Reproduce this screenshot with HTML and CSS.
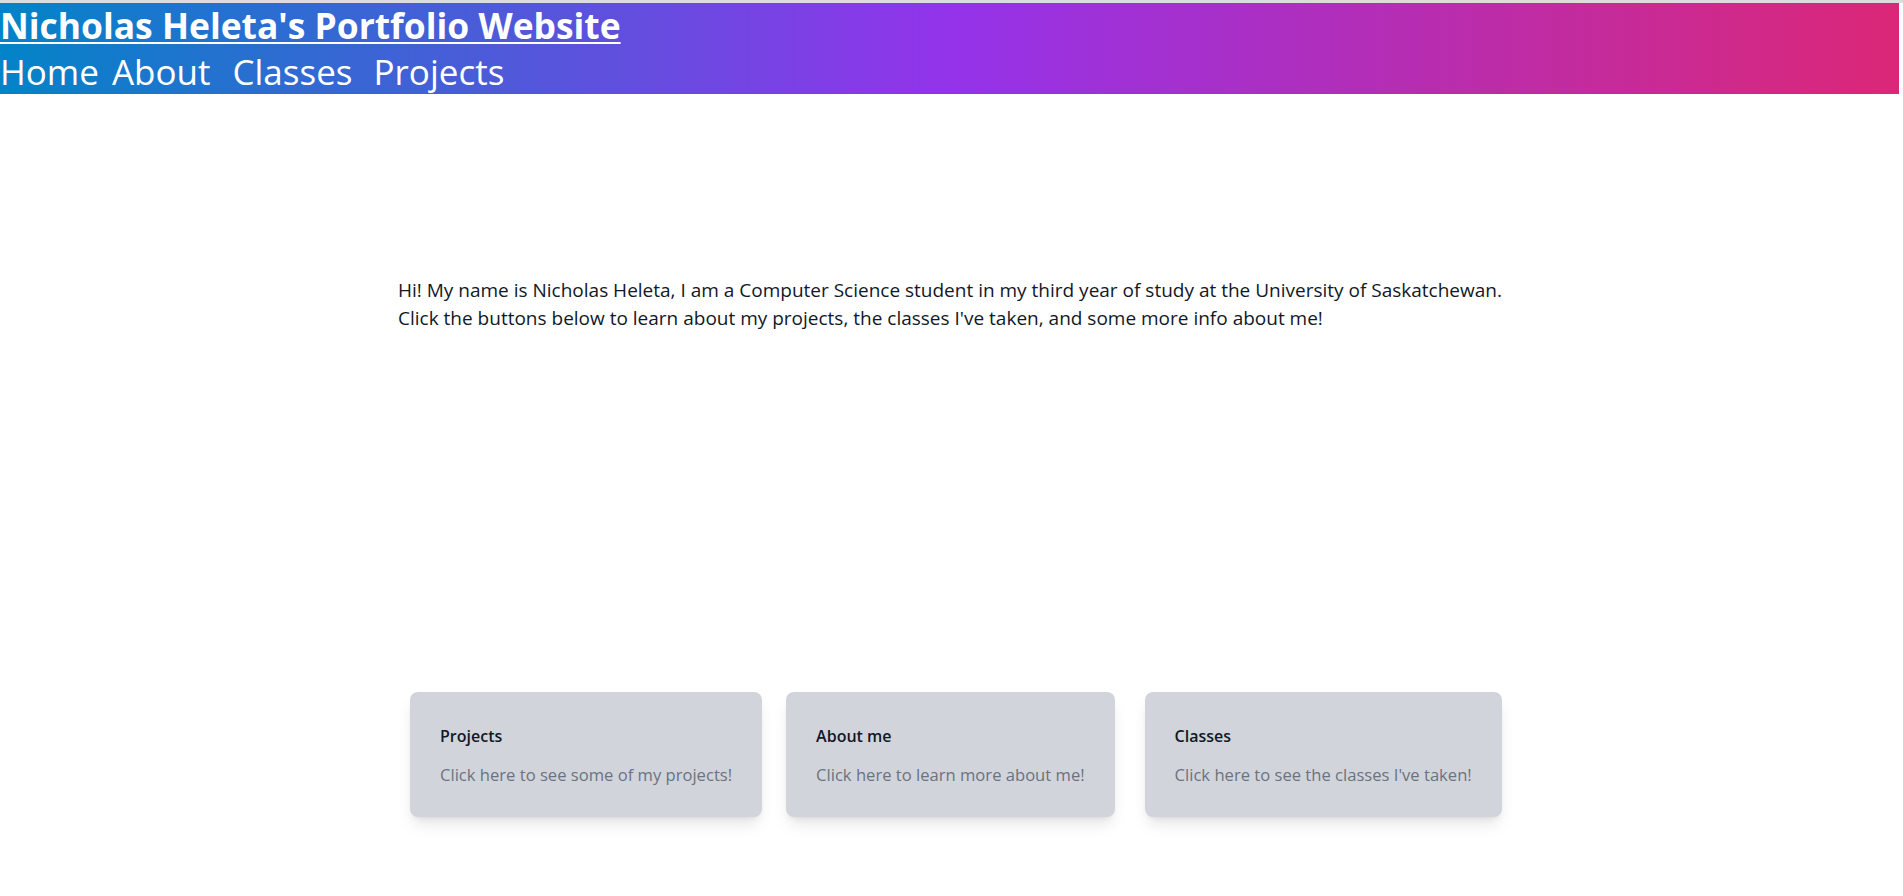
FILE: index.html
```html
<!DOCTYPE html>
<html lang="en">
<head>
<meta charset="utf-8">
<title>Nicholas Heleta's Portfolio Website</title>
<link rel="stylesheet" href="styles.css">
</head>
<body>
  <header class="site-header">
    <h1 class="site-title"><a href="#">Nicholas Heleta's Portfolio Website</a></h1>
    <nav class="site-nav">
      <a href="#" class="nav-link">Home</a>
      <a href="#" class="nav-link nav-about">About</a>
      <a href="#" class="nav-link nav-classes">Classes</a>
      <a href="#" class="nav-link nav-projects">Projects</a>
    </nav>
  </header>
  <main class="content">
    <div class="intro">
      <p>Hi! My name is Nicholas Heleta, I am a Computer Science student in my third year of study at the University of Saskatchewan.</p>
      <p>Click the buttons below to learn about my projects, the classes I've taken, and some more info about me!</p>
    </div>
    <div class="cards">
      <a href="#" class="card">
        <h2 class="card-title">Projects</h2>
        <p class="card-text">Click here to see some of my projects!</p>
      </a>
      <a href="#" class="card">
        <h2 class="card-title">About me</h2>
        <p class="card-text">Click here to learn more about me!</p>
      </a>
      <a href="#" class="card card-last">
        <h2 class="card-title">Classes</h2>
        <p class="card-text">Click here to see the classes I've taken!</p>
      </a>
    </div>
  </main>
</body>
</html>
```
FILE: styles.css
```css
html {
  background: #ffffff;
}

body {
  margin: 0;
  border-top: 3px solid #dcdcdc;
  font-family: "Open Sans", "Noto Sans", sans-serif;
  color: #111827;
}

.site-header {
  background: linear-gradient(to right, #0284c7, #9333ea, #db2777);
  color: #ffffff;
  height: 91px;
  margin-right: 4px;
}

.site-title {
  margin: 0;
  font-size: 35.4px;
  font-weight: 700;
  line-height: 45px;
}
.site-title a {
  color: #ffffff;
  text-decoration: underline;
  text-decoration-thickness: 2px;
  text-underline-offset: 3px;
}

.site-nav {
  display: flex;
  padding-top: 2px;
  font-size: 35px;
  line-height: 44px;
}
.nav-link {
  color: #ffffff;
  text-decoration: none;
}
.nav-about { margin-left: 13px; }
.nav-classes { margin-left: 22px; }
.nav-projects { margin-left: 21px; }

.content {
  width: 1103px;
  margin: 0 auto;
  padding: 182px 0 80px;
  position: relative;
  left: -2px;
}

.intro p {
  margin: 0;
  font-size: 19px;
  line-height: 28px;
  white-space: nowrap;
}

.cards {
  display: flex;
  align-items: flex-start;
  margin-top: 360px;
  padding-left: 12px;
  gap: 24px;
}
.card-last { margin-left: 6px; }

.card {
  display: block;
  flex-shrink: 0;
  padding: 32px 30px 28px;
  background: #d1d5db;
  border-radius: 8px;
  box-shadow: 0 10px 15px -3px rgba(0, 0, 0, 0.1), 0 4px 6px -4px rgba(0, 0, 0, 0.1);
  text-decoration: none;
  white-space: nowrap;
}
.card-title {
  margin: 0;
  font-size: 16px;
  font-weight: 600;
  line-height: 24px;
  color: #111827;
}
.card-text {
  margin: 13px 0 0;
  font-size: 16.6px;
  line-height: 28px;
  color: #6b7280;
}
```
